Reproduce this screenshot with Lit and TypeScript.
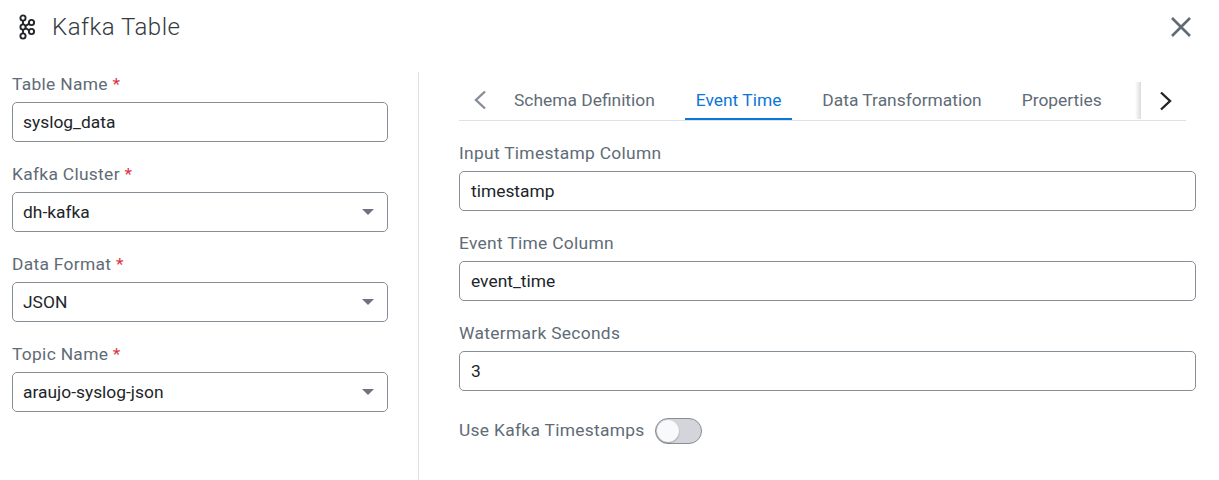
import { css, html, LitElement, nothing } from 'lit';
import { customElement } from 'lit/decorators.js';

const leftFields = [
    { label: 'Table Name', value: 'syslog_data', select: false },
    { label: 'Kafka Cluster', value: 'dh-kafka', select: true },
    { label: 'Data Format', value: 'JSON', select: true },
    { label: 'Topic Name', value: 'araujo-syslog-json', select: true },
];

const rightFields = [
    { label: 'Input Timestamp Column', value: 'timestamp' },
    { label: 'Event Time Column', value: 'event_time' },
    { label: 'Watermark Seconds', value: '3' },
];

const tabs = ['Schema Definition', 'Event Time', 'Data Transformation', 'Properties'];

@customElement('app-root')
export class AppRoot extends LitElement
{
    protected render(): unknown
    {
        return html`
<header class="head">
    <svg class="logo" width="18" height="26" viewBox="0 0 18 26" fill="none" stroke="#212529" stroke-width="1.9">
        <circle cx="5" cy="4" r="2.6"></circle>
        <circle cx="5" cy="13" r="2.6"></circle>
        <circle cx="5" cy="22" r="2.6"></circle>
        <circle cx="13.5" cy="8.5" r="2.6"></circle>
        <circle cx="13.5" cy="17.5" r="2.6"></circle>
        <path d="M5 6.5v4M5 15.5v4M7.4 12l3.8-2.4M7.4 14l3.8 2.4"></path>
    </svg>
    <h1 class="title">Kafka Table</h1>
    <svg class="close" width="22" height="22" viewBox="0 0 22 22" stroke="#5f6b76" stroke-width="2.6" fill="none">
        <path d="M2 2l18 18M20 2L2 20"></path>
    </svg>
</header>
<div class="body">
    <section class="left">
        ${leftFields.map((f) => html`
        <div class="field">
            <label class="label">${f.label} <span class="req">*</span></label>
            <div class="input">
                <span>${f.value}</span>
                ${f.select ? html`<span class="caret"></span>` : nothing}
            </div>
        </div>`)}
    </section>
    <section class="right">
        <nav class="tabs">
            <svg class="prev" width="14" height="20" viewBox="0 0 14 20" fill="none" stroke="#868e96" stroke-width="2.4">
                <path d="M12 1.5L3 10l9 8.5"></path>
            </svg>
            ${tabs.map((t) => html`<span class="tab ${t === 'Event Time' ? 'active' : ''}">${t}</span>`)}
            <div class="next">
                <svg width="14" height="20" viewBox="0 0 14 20" fill="none" stroke="#212529" stroke-width="2.4">
                    <path d="M2 1.5L11 10l-9 8.5"></path>
                </svg>
            </div>
        </nav>
        ${rightFields.map((f) => html`
        <div class="field">
            <label class="label">${f.label}</label>
            <div class="input"><span>${f.value}</span></div>
        </div>`)}
        <div class="switch-row">
            <span class="label">Use Kafka Timestamps</span>
            <span class="switch"><span class="knob"></span></span>
        </div>
    </section>
</div>
`;
    }

    static get styles()
    {
        return css`
:host {
    display: block;
    width: 1219px;
    height: 480px;
    overflow: hidden;
    background: #fff;
    font-family: Roboto, "Liberation Sans", sans-serif;
    font-size: 17.4px;
    color: #212529;
}

.head {
    display: flex;
    align-items: center;
    height: 54px;
    padding: 0 27px 0 18px;
    box-sizing: border-box;
}

.logo {
    flex: none;
}

.title {
    margin: 0 0 0 16px;
    flex: 1;
    font-size: 24px;
    font-weight: 300;
    line-height: 28px;
    color: #343a40;
    letter-spacing: 0.5px;
}

.body {
    display: flex;
    margin-top: 18px;
    height: 408px;
}

.left {
    width: 419px;
    box-sizing: border-box;
    padding: 0 30px 0 12px;
    border-right: 1px solid #dee2e6;
}

.left .input {
    padding: 0 11px 0 10px;
}

.right {
    flex: 1;
    padding: 0 23px 0 40px;
}

.field {
    height: 90px;
}

.tabs + .field {
    margin-top: 20px;
}

.label {
    display: block;
    height: 30px;
    line-height: 25px;
    color: #5f6b76;
    letter-spacing: 0.3px;
}

.req {
    color: #dc3545;
}

.input {
    display: flex;
    align-items: center;
    justify-content: space-between;
    height: 40px;
    box-sizing: border-box;
    padding: 0 11px;
    border: 1px solid #868e96;
    border-radius: 5px;
}

.caret {
    width: 0;
    height: 0;
    margin-right: 2px;
    border-left: 6px solid transparent;
    border-right: 6px solid transparent;
    border-top: 6px solid #6c757d;
}

.tabs {
    display: flex;
    align-items: center;
    width: 727px;
    height: 49px;
    box-sizing: border-box;
    border-bottom: 1px solid #dee2e6;
    position: relative;
}

.prev {
    flex: none;
    margin: 8px 27px 0 14px;
}

.tab {
    padding: 0 10px;
    height: 48px;
    margin-right: 20px;
    line-height: 56px;
    box-sizing: border-box;
    color: #5f6b76;
    white-space: nowrap;
}

.tab:first-of-type {
    margin-left: -10px;
    margin-right: 21px;
}

.tab.active {
    color: #0b76d9;
    border-bottom: 2px solid #0b76d9;
    height: 48px;
    padding: 0 11px;
    margin-left: -1px;
    margin-right: 20px;
}

.next {
    position: absolute;
    right: 0;
    top: 10px;
    width: 45px;
    height: 37px;
    box-sizing: border-box;
    padding-left: 4px;
    display: flex;
    align-items: center;
    justify-content: center;
    background: #fff;
}

.next::before {
    content: "";
    position: absolute;
    right: 100%;
    top: 0;
    bottom: 0;
    width: 6px;
    background: linear-gradient(to left, rgba(0, 0, 0, 0.14), rgba(0, 0, 0, 0));
}

.switch-row {
    display: flex;
    align-items: center;
    gap: 10px;
    margin-top: 7px;
}

.switch-row .label {
    height: 25px;
    line-height: 23px;
}

.switch {
    display: block;
    position: relative;
    width: 47px;
    height: 26px;
    box-sizing: border-box;
    border: 1px solid #868e96;
    border-radius: 13px;
    background: #d3d5da;
}

.knob {
    position: absolute;
    left: 1px;
    top: 1px;
    width: 22px;
    height: 22px;
    border-radius: 50%;
    background: #f8f9fa;
    box-shadow: 0 1px 2px rgba(0, 0, 0, 0.25);
}
`;
    }
}
